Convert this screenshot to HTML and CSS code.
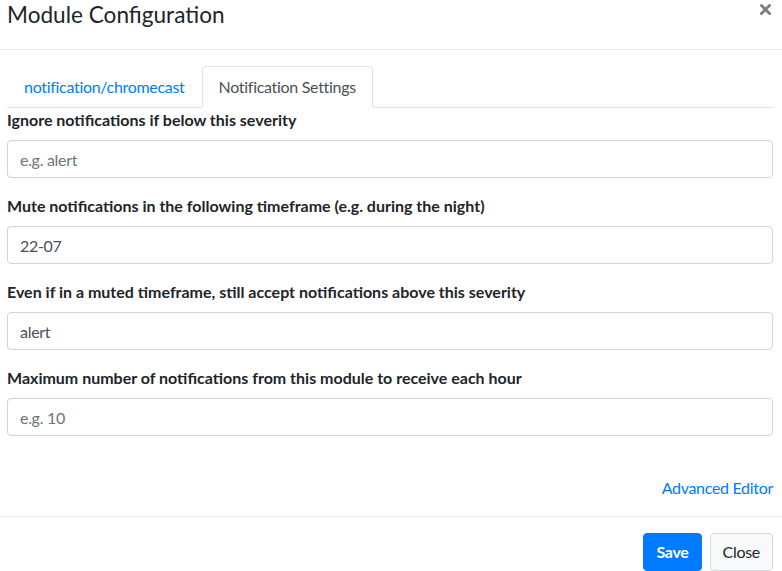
FILE: index.html
```html
<!DOCTYPE html>
<html lang="en">
<head>
<meta charset="utf-8">
<title>Module Configuration</title>
<link rel="stylesheet" href="styles.css">
</head>
<body>
<div class="modal">
  <div class="modal-header">
    <h5 class="modal-title">Module Configuration</h5>
    <button class="close" type="button" aria-label="Close">
      <svg width="11" height="11" viewBox="0 0 11 11"><path d="M1.5 1.5 L9.5 9.5 M9.5 1.5 L1.5 9.5" stroke="#7d7d7d" stroke-width="2.8" stroke-linecap="square"/></svg>
    </button>
  </div>
  <div class="modal-body">
    <ul class="nav-tabs">
      <li><a class="nav-link" href="#">notification/chromecast</a></li>
      <li><a class="nav-link active" href="#">Notification Settings</a></li>
    </ul>
    <form class="form">
      <div class="form-group">
        <label class="label">Ignore notifications if below this severity</label>
        <input class="input" type="text" placeholder="e.g. alert">
      </div>
      <div class="form-group">
        <label class="label">Mute notifications in the following timeframe (e.g. during the night)</label>
        <input class="input" type="text" value="22-07">
      </div>
      <div class="form-group">
        <label class="label">Even if in a muted timeframe, still accept notifications above this severity</label>
        <input class="input" type="text" value="alert">
      </div>
      <div class="form-group">
        <label class="label">Maximum number of notifications from this module to receive each hour</label>
        <input class="input" type="text" placeholder="e.g. 10">
      </div>
    </form>
    <div class="advanced">
      <a class="link" href="#">Advanced Editor</a>
    </div>
  </div>
  <div class="modal-footer">
    <button class="btn btn-primary" type="button">Save</button>
    <button class="btn btn-light" type="button">Close</button>
  </div>
</div>
</body>
</html>
```
FILE: styles.css
```css
* { box-sizing: border-box; }
html, body {
  margin: 0;
  padding: 0;
  background: #fff;
}
body {
  font-family: "Lato", "Liberation Sans", sans-serif;
  font-size: 16px;
  line-height: 1.5;
  color: #212529;
  letter-spacing: -0.3px;
}
.modal {
  width: 782px;
  height: 571px;
  overflow: hidden;
}
.modal-header {
  display: flex;
  justify-content: space-between;
  align-items: flex-start;
  height: 50px;
  padding: 1px 9px 0 7px;
  border-bottom: 1px solid #e9ecef;
}
.modal-title {
  margin: 0;
  font-size: 22.6px;
  font-weight: 400;
  line-height: 28px;
  letter-spacing: 0;
}
.close {
  background: none;
  border: 0;
  padding: 0;
  margin: 3px 2px 0 0;
  line-height: 0;
  cursor: pointer;
}
.modal-body {
  padding: 16px 9px 16px 7px;
}
.nav-tabs {
  display: flex;
  list-style: none;
  margin: 0;
  padding: 0;
  border-bottom: 1px solid #dee2e6;
}
.nav-tabs li {
  margin-bottom: -1px;
}
.nav-link {
  display: block;
  padding: 8px 16px;
  border: 1px solid transparent;
  border-top-left-radius: 4px;
  border-top-right-radius: 4px;
  color: #007bff;
  text-decoration: none;
  line-height: 24px;
}
.nav-link.active {
  color: #495057;
  background: #fff;
  border-color: #dee2e6 #dee2e6 #fff;
}
.form {
  margin: 0;
}
.form-group {
  margin-bottom: 16px;
}
.label {
  display: block;
  font-weight: 700;
  margin-bottom: 8px;
  line-height: 24px;
  letter-spacing: 0;
}
.input {
  display: block;
  width: 100%;
  height: 38px;
  padding: 6px 12px;
  font-family: inherit;
  font-size: 16px;
  line-height: 24px;
  letter-spacing: -0.3px;
  color: #495057;
  background: #fff;
  border: 1px solid #ced4da;
  border-radius: 4px;
}
.input::placeholder {
  color: #6c757d;
  opacity: 1;
}
.advanced {
  display: flex;
  justify-content: flex-end;
  margin-top: 40px;
}
.link {
  color: #007bff;
  text-decoration: none;
  line-height: 24px;
}
.modal-footer {
  display: flex;
  justify-content: flex-end;
  gap: 8px;
  padding: 16px 9px 0 7px;
  border-top: 1px solid #e9ecef;
}
.btn {
  font-family: inherit;
  font-size: 16px;
  line-height: 24px;
  letter-spacing: -0.3px;
  padding: 6px 12px;
  border-radius: 4px;
  border: 1px solid transparent;
  cursor: pointer;
}
.btn-primary {
  color: #fff;
  background: #007bff;
  border-color: #007bff;
  font-weight: 700;
}
.btn-light {
  color: #212529;
  background: #f8f9fa;
  border-color: #d6d8db;
}
```
